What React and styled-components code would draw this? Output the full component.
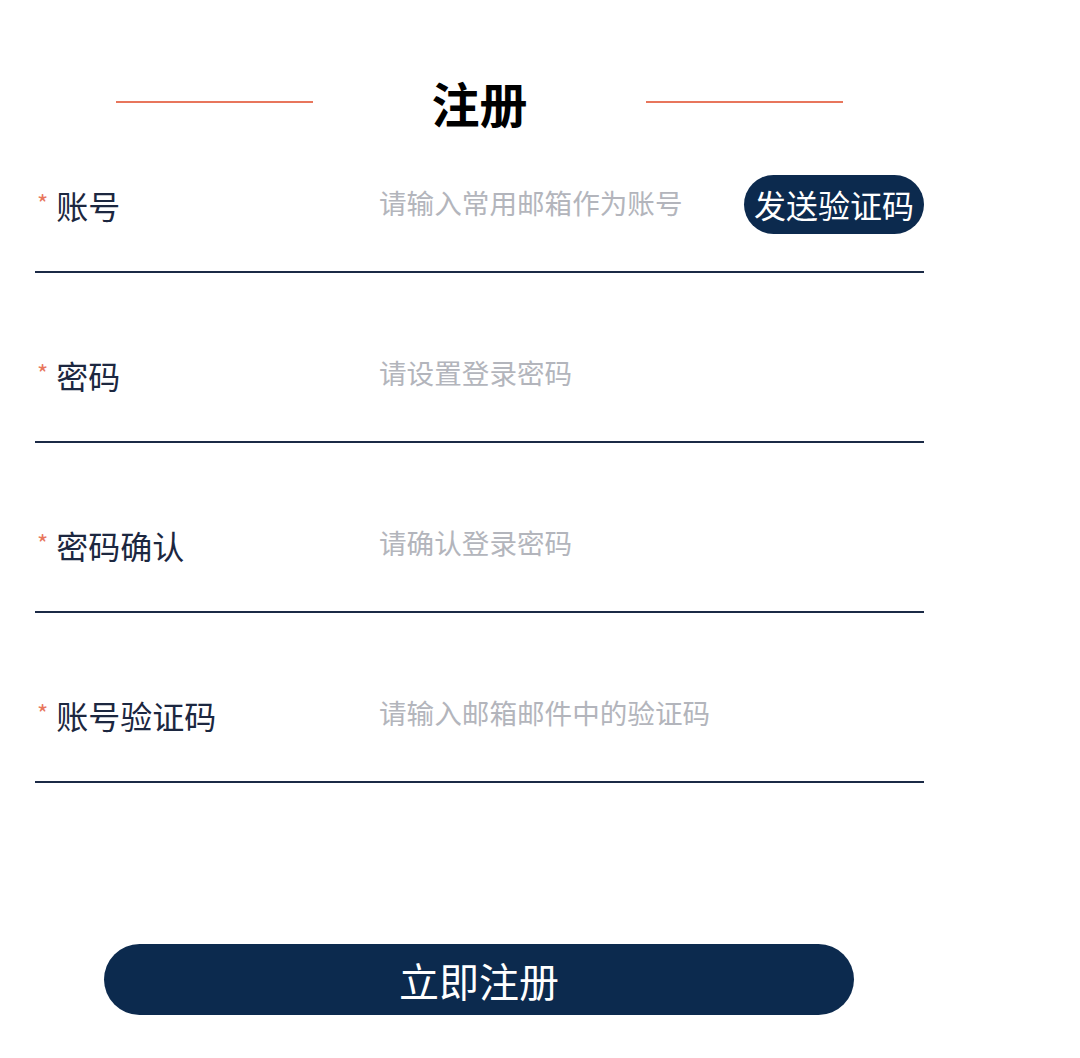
import React from 'react'
import styled, { createGlobalStyle } from 'styled-components'

const GlobalStyle = createGlobalStyle`
	body {
		margin: 0;
		background: #fff;
		font-family: 'Noto Sans CJK SC', 'Noto Sans', sans-serif;
	}
`

const fields = [
	{ label: '账号', placeholder: '请输入常用邮箱作为账号', type: 'text', send: true },
	{ label: '密码', placeholder: '请设置登录密码', type: 'password' },
	{ label: '密码确认', placeholder: '请确认登录密码', type: 'password' },
	{ label: '账号验证码', placeholder: '请输入邮箱邮件中的验证码', type: 'text' },
]

const App = () => {
	return (
		<>
			<GlobalStyle />
			<Page>
				<Header>
					<Line />
					<Title>注册</Title>
					<Line />
				</Header>
				<Form>
					{fields.map((f) => (
						<Row key={f.label}>
							<Label>
								<Star>*</Star>
								{f.label}
							</Label>
							<Input type={f.type} placeholder={f.placeholder} />
							{f.send && <SendButton type="button">发送验证码</SendButton>}
						</Row>
					))}
				</Form>
				<Submit type="button">立即注册</Submit>
			</Page>
		</>
	)
}

const Page = styled.div`
	width: 889px;
	margin-left: 35px;
	padding-top: 71px;
	padding-bottom: 43px;
`
const Header = styled.div`
	display: flex;
	align-items: center;
	justify-content: center;
	gap: 118px;
	height: 62px;
	margin-bottom: 12px;
`
const Line = styled.div`
	width: 197px;
	height: 2px;
	background: #e8765c;
`
const Title = styled.h1`
	margin: 0;
	font-size: 48px;
	font-weight: 700;
	line-height: 62px;
	color: #000;
`
const Form = styled.div`
	display: flex;
	flex-direction: column;
	gap: 42px;
`
const Row = styled.div`
	display: flex;
	align-items: center;
	height: 128px;
	padding-bottom: 4px;
	border-bottom: 2px solid #1b2a46;
	box-sizing: border-box;
`
const Label = styled.div`
	width: 344px;
	flex-shrink: 0;
	display: flex;
	align-items: center;
	font-size: 32px;
	color: #1c2740;
	padding-bottom: 2px;
`
const Star = styled.span`
	color: #e8765c;
	font-size: 24px;
	margin: 0 8px 0 2px;
	position: relative;
	top: -3px;
`
const Input = styled.input`
	flex: 1;
	min-width: 0;
	border: none;
	outline: none;
	background: transparent;
	font-family: inherit;
	font-size: 27.6px;
	color: #1c2740;
	padding: 0 0 8px;
	&::placeholder {
		color: #b3b5bc;
	}
`
const SendButton = styled.button`
	height: 59px;
	padding: 0 10px;
	border: none;
	border-radius: 30px;
	background: #0c2a4e;
	color: #fff;
	font-family: inherit;
	font-size: 32px;
	cursor: pointer;
	margin-top: -4px;
`
const Submit = styled.button`
	display: block;
	width: 750px;
	height: 71px;
	margin: 161px 0 0 69px;
	border: none;
	border-radius: 36px;
	background: #0c2a4e;
	color: #fff;
	font-family: inherit;
	font-size: 40px;
	cursor: pointer;
`

export default App
